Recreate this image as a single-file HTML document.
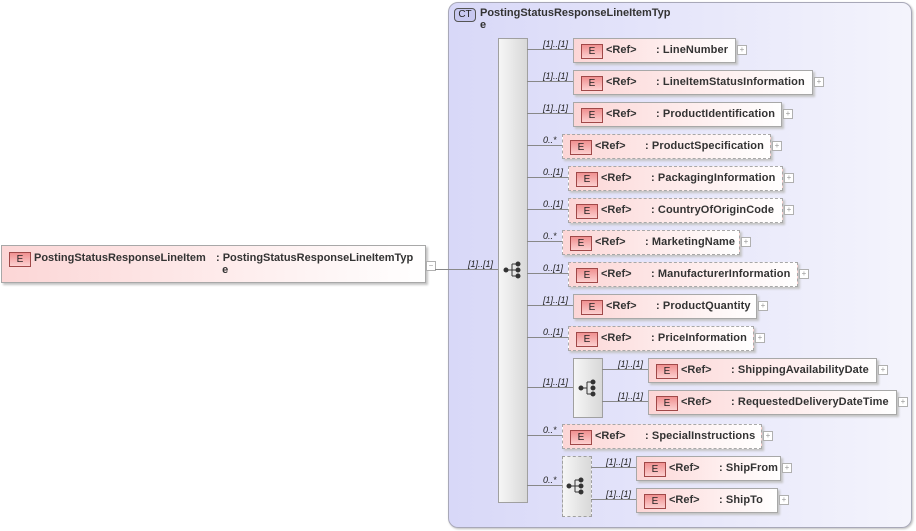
<!DOCTYPE html>
<html><head><meta charset="utf-8"><style>
body{margin:0;width:916px;height:531px;background:#fff;position:relative;overflow:hidden;font-family:"Liberation Sans",Arial,sans-serif;}
.a{position:absolute}
.ct{left:448px;top:2px;width:462px;height:524px;border:1px solid #a8a8b8;border-radius:10px;background:linear-gradient(90deg,#d8d8f8,#f4f4fc);box-shadow:1px 1px 2px #bbb}
.seq{background:linear-gradient(90deg,#f6f6f6,#d8d8d8);border:1px solid #a0a0a0}
.el{height:25px;border:1px solid #a8a8a8;background:linear-gradient(90deg,#fcd6d6,#fff);box-shadow:2px 2px 2px #c4c4c4;font-size:11px;font-weight:bold;color:#333;box-sizing:border-box}
.d{border:1px dashed #a8a8a8}
.e{position:absolute;left:7px;top:5px;width:20px;height:13px;border:1px solid #a04848;background:linear-gradient(#f09090,#fcd0d0);font-size:10px;font-weight:normal;text-align:center;line-height:13px;color:#222}
.r{position:absolute;left:32px;top:5px}
.n{position:absolute;left:82px;top:5px;white-space:nowrap;letter-spacing:0.1px}
.ln{height:1px;background:#888}
.lb{font-size:9px;font-style:italic;color:#222}
.pl{width:8px;height:8px;border:1px solid #b0b0b0;background:#fff;font-size:8px;line-height:8px;text-align:center;color:#999}
</style></head><body>
<div class="a ct"></div>
<div class="a" style="left:454px;top:8px;width:20px;height:12px;border:1px solid #555;border-radius:4px;background:#c8c8f0;font-size:10px;line-height:12px;text-align:center;color:#222">CT</div>
<div class="a" style="left:480px;top:7px;font-size:11px;font-weight:bold;color:#333;line-height:12px">PostingStatusResponseLineItemTyp<br>e</div>

<div class="a el" style="left:1px;top:245px;width:425px;height:38px"><div class="e" style="top:6px">E</div><span class="a" style="left:32px;top:6px">PostingStatusResponseLineItem</span><span class="a" style="left:214px;top:6px;line-height:12px">: PostingStatusResponseLineItemTyp<br>&nbsp;&nbsp;e</span></div>
<div class="a pl" style="left:426px;top:261px">−</div>
<div class="a ln" style="left:435px;top:269px;width:63px"></div>
<div class="a lb" style="left:468px;top:259px">[1]..[1]</div>

<div class="a seq" style="left:498px;top:38px;width:28px;height:463px"></div>
<svg class="a" style="left:503px;top:260px" width="20" height="20"><g fill="#333" stroke="#333"><circle cx="3" cy="10" r="2"/><line x1="3" y1="10" x2="9" y2="10"/><line x1="9" y1="4" x2="9" y2="16"/><line x1="9" y1="4" x2="14" y2="4"/><line x1="9" y1="10" x2="14" y2="10"/><line x1="9" y1="16" x2="14" y2="16"/><circle cx="15" cy="4" r="2"/><circle cx="15" cy="10" r="2"/><circle cx="15" cy="16" r="2"/></g></svg>

<div class="a ln" style="left:527px;top:49px;width:46px"></div><div class="a lb" style="left:543px;top:39px">[1]..[1]</div>
<div class="a el" style="left:573px;top:38px;width:163px"><div class="e">E</div><span class="r">&lt;Ref&gt;</span><span class="n">: LineNumber</span></div><div class="a pl" style="left:737px;top:45px">+</div>

<div class="a ln" style="left:527px;top:81px;width:46px"></div><div class="a lb" style="left:543px;top:71px">[1]..[1]</div>
<div class="a el" style="left:573px;top:70px;width:240px"><div class="e">E</div><span class="r">&lt;Ref&gt;</span><span class="n">: LineItemStatusInformation</span></div><div class="a pl" style="left:814px;top:77px">+</div>

<div class="a ln" style="left:527px;top:113px;width:46px"></div><div class="a lb" style="left:543px;top:103px">[1]..[1]</div>
<div class="a el" style="left:573px;top:102px;width:209px"><div class="e">E</div><span class="r">&lt;Ref&gt;</span><span class="n">: ProductIdentification</span></div><div class="a pl" style="left:783px;top:109px">+</div>

<div class="a ln" style="left:527px;top:145px;width:35px"></div><div class="a lb" style="left:543px;top:135px">0..*</div>
<div class="a el d" style="left:562px;top:134px;width:209px"><div class="e">E</div><span class="r">&lt;Ref&gt;</span><span class="n">: ProductSpecification</span></div><div class="a pl" style="left:772px;top:141px">+</div>

<div class="a ln" style="left:527px;top:177px;width:41px"></div><div class="a lb" style="left:543px;top:167px">0..[1]</div>
<div class="a el d" style="left:568px;top:166px;width:215px"><div class="e">E</div><span class="r">&lt;Ref&gt;</span><span class="n">: PackagingInformation</span></div><div class="a pl" style="left:784px;top:173px">+</div>

<div class="a ln" style="left:527px;top:209px;width:41px"></div><div class="a lb" style="left:543px;top:199px">0..[1]</div>
<div class="a el d" style="left:568px;top:198px;width:215px"><div class="e">E</div><span class="r">&lt;Ref&gt;</span><span class="n">: CountryOfOriginCode</span></div><div class="a pl" style="left:784px;top:205px">+</div>

<div class="a ln" style="left:527px;top:241px;width:35px"></div><div class="a lb" style="left:543px;top:231px">0..*</div>
<div class="a el d" style="left:562px;top:230px;width:178px"><div class="e">E</div><span class="r">&lt;Ref&gt;</span><span class="n">: MarketingName</span></div><div class="a pl" style="left:741px;top:237px">+</div>

<div class="a ln" style="left:527px;top:273px;width:41px"></div><div class="a lb" style="left:543px;top:263px">0..[1]</div>
<div class="a el d" style="left:568px;top:262px;width:230px"><div class="e">E</div><span class="r">&lt;Ref&gt;</span><span class="n">: ManufacturerInformation</span></div><div class="a pl" style="left:799px;top:269px">+</div>

<div class="a ln" style="left:527px;top:305px;width:46px"></div><div class="a lb" style="left:543px;top:295px">[1]..[1]</div>
<div class="a el" style="left:573px;top:294px;width:184px"><div class="e">E</div><span class="r">&lt;Ref&gt;</span><span class="n">: ProductQuantity</span></div><div class="a pl" style="left:758px;top:301px">+</div>

<div class="a ln" style="left:527px;top:337px;width:41px"></div><div class="a lb" style="left:543px;top:327px">0..[1]</div>
<div class="a el d" style="left:568px;top:326px;width:186px"><div class="e">E</div><span class="r">&lt;Ref&gt;</span><span class="n">: PriceInformation</span></div><div class="a pl" style="left:755px;top:333px">+</div>

<div class="a ln" style="left:527px;top:387px;width:46px"></div><div class="a lb" style="left:543px;top:377px">[1]..[1]</div>
<div class="a seq" style="left:573px;top:358px;width:28px;height:58px"></div>
<svg class="a" style="left:578px;top:378px" width="20" height="20"><g fill="#333" stroke="#333"><circle cx="3" cy="10" r="2"/><line x1="3" y1="10" x2="9" y2="10"/><line x1="9" y1="4" x2="9" y2="16"/><line x1="9" y1="4" x2="14" y2="4"/><line x1="9" y1="16" x2="14" y2="16"/><circle cx="15" cy="4" r="2"/><circle cx="15" cy="10" r="2"/><circle cx="15" cy="16" r="2"/></g></svg>
<div class="a ln" style="left:602px;top:369px;width:46px"></div><div class="a lb" style="left:618px;top:359px">[1]..[1]</div>
<div class="a el" style="left:648px;top:358px;width:229px"><div class="e">E</div><span class="r">&lt;Ref&gt;</span><span class="n">: ShippingAvailabilityDate</span></div><div class="a pl" style="left:878px;top:365px">+</div>
<div class="a ln" style="left:602px;top:401px;width:46px"></div><div class="a lb" style="left:618px;top:391px">[1]..[1]</div>
<div class="a el" style="left:648px;top:390px;width:249px"><div class="e">E</div><span class="r">&lt;Ref&gt;</span><span class="n">: RequestedDeliveryDateTime</span></div><div class="a pl" style="left:898px;top:397px">+</div>

<div class="a ln" style="left:527px;top:435px;width:35px"></div><div class="a lb" style="left:543px;top:425px">0..*</div>
<div class="a el d" style="left:562px;top:424px;width:200px"><div class="e">E</div><span class="r">&lt;Ref&gt;</span><span class="n">: SpecialInstructions</span></div><div class="a pl" style="left:763px;top:431px">+</div>

<div class="a ln" style="left:527px;top:485px;width:35px"></div><div class="a lb" style="left:543px;top:475px">0..*</div>
<div class="a seq" style="left:562px;top:456px;width:28px;height:59px;border-style:dashed"></div>
<svg class="a" style="left:566px;top:476px" width="20" height="20"><g fill="#333" stroke="#333"><circle cx="3" cy="10" r="2"/><line x1="3" y1="10" x2="9" y2="10"/><line x1="9" y1="4" x2="9" y2="16"/><line x1="9" y1="4" x2="14" y2="4"/><line x1="9" y1="10" x2="14" y2="10"/><line x1="9" y1="16" x2="14" y2="16"/><circle cx="15" cy="4" r="2"/><circle cx="15" cy="10" r="2"/><circle cx="15" cy="16" r="2"/></g></svg>
<div class="a ln" style="left:591px;top:467px;width:45px"></div><div class="a lb" style="left:606px;top:457px">[1]..[1]</div>
<div class="a el" style="left:636px;top:456px;width:145px"><div class="e">E</div><span class="r">&lt;Ref&gt;</span><span class="n">: ShipFrom</span></div><div class="a pl" style="left:782px;top:463px">+</div>
<div class="a ln" style="left:591px;top:499px;width:45px"></div><div class="a lb" style="left:606px;top:489px">[1]..[1]</div>
<div class="a el" style="left:636px;top:488px;width:142px"><div class="e">E</div><span class="r">&lt;Ref&gt;</span><span class="n">: ShipTo</span></div><div class="a pl" style="left:779px;top:495px">+</div>
</body></html>
